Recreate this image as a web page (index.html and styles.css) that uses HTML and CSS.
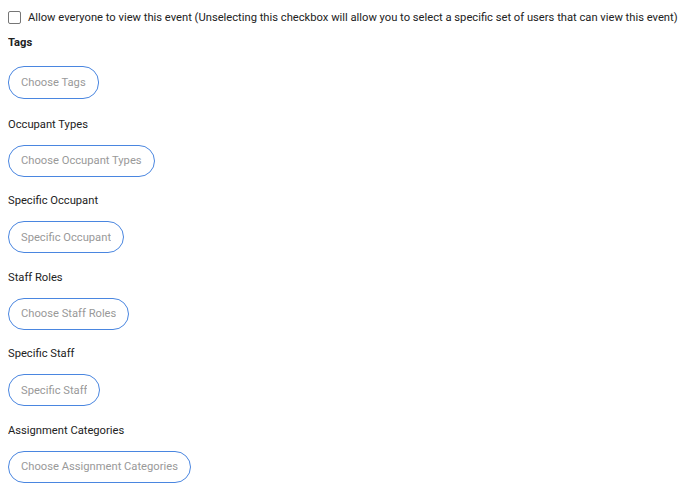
FILE: index.html
```html
<!DOCTYPE html>
<html lang="en">
<head>
    <meta charset="UTF-8">
    <title>Event visibility</title>
    <link rel="stylesheet" href="styles.css">
</head>
<body>
    <div class="form">
        <label class="check">
            <input type="checkbox">
            <span>Allow everyone to view this event (Unselecting this checkbox will allow you to select a specific set of users that can view this event)</span>
        </label>

        <div class="field tags">
            <div class="label bold">Tags</div>
            <input class="pill" type="text" placeholder="Choose Tags">
        </div>
        <div class="field">
            <div class="label">Occupant Types</div>
            <input class="pill" type="text" placeholder="Choose Occupant Types">
        </div>
        <div class="field">
            <div class="label">Specific Occupant</div>
            <input class="pill" type="text" placeholder="Specific Occupant">
        </div>
        <div class="field">
            <div class="label">Staff Roles</div>
            <input class="pill" type="text" placeholder="Choose Staff Roles">
        </div>
        <div class="field">
            <div class="label">Specific Staff</div>
            <input class="pill" type="text" placeholder="Specific Staff">
        </div>
        <div class="field">
            <div class="label">Assignment Categories</div>
            <input class="pill" type="text" placeholder="Choose Assignment Categories">
        </div>
    </div>
</body>
</html>
```

FILE: styles.css
```css
*{
    margin: 0;
    padding: 0;
    box-sizing: border-box;
}
body{
    margin: 8px;
    font-family: Roboto, "Liberation Sans", sans-serif;
    font-size: 11.2px;
    color: #222;
    background: #fff;
}
.check{
    display: flex;
    align-items: center;
    gap: 7px;
    height: 16px;
    margin-top: 1px;
}
.check input{
    width: 13px;
    height: 13px;
    margin: 0;
    appearance: none;
    border: 1px solid #767676;
    border-radius: 2px;
    background: #fff;
}
.field{
    display: flex;
    flex-direction: column;
    align-items: flex-start;
}
.label{
    margin-top: 16.5px;
    line-height: 16px;
}
.bold{
    font-weight: bold;
    margin-top: 10px;
}
.pill{
    margin-top: 12px;
    height: 32px;
    padding: 0 12px;
    border: 1px solid #4a86e0;
    border-radius: 16px;
    font-family: inherit;
    font-size: 11.2px;
    color: #222;
    background: #fff;
    outline: none;
    field-sizing: content;
}
.tags .pill{
    margin-top: 15px;
    margin-bottom: 1px;
    height: 33px;
}
.pill::placeholder{
    color: #999;
}
```
